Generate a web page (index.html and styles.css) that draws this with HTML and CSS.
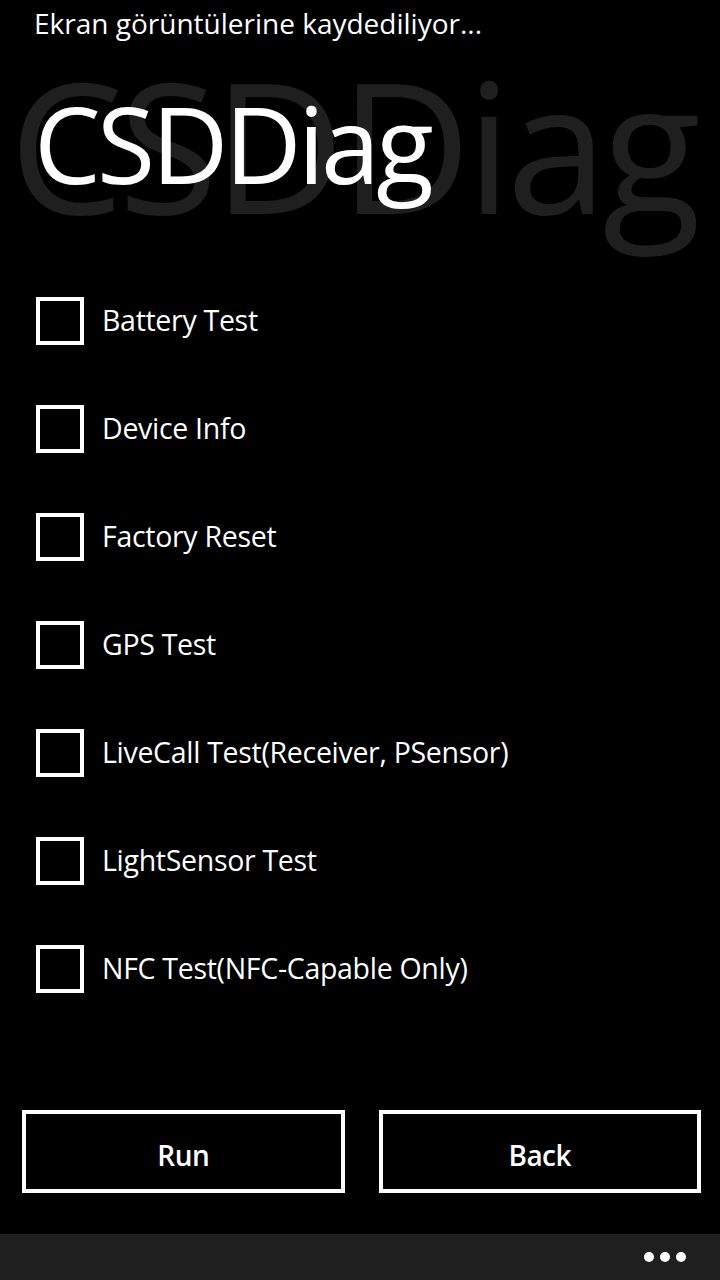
FILE: index.html
```html
<!DOCTYPE html>
<html lang="tr">
<head>
<meta charset="utf-8">
<title>CSDDiag</title>
<link rel="stylesheet" href="styles.css">
</head>
<body>
<div class="screen">
  <div class="status">Ekran görüntülerine kaydediliyor...</div>
  <header class="header">
    <div class="title-bg" aria-hidden="true">CSDDiag</div>
    <h1 class="title">CSDDiag</h1>
  </header>
  <ul class="tests">
    <li class="test"><span class="box"></span><span class="label">Battery Test</span></li>
    <li class="test"><span class="box"></span><span class="label">Device Info</span></li>
    <li class="test"><span class="box"></span><span class="label">Factory Reset</span></li>
    <li class="test"><span class="box"></span><span class="label">GPS Test</span></li>
    <li class="test"><span class="box"></span><span class="label">LiveCall Test(Receiver, PSensor)</span></li>
    <li class="test"><span class="box"></span><span class="label">LightSensor Test</span></li>
    <li class="test"><span class="box"></span><span class="label">NFC Test(NFC-Capable Only)</span></li>
  </ul>
  <div class="actions">
    <button class="btn">Run</button>
    <button class="btn">Back</button>
  </div>
  <footer class="appbar">
    <div class="dots"><span></span><span></span><span></span></div>
  </footer>
</div>
</body>
</html>
```
FILE: styles.css
```css
html, body {
  margin: 0;
  padding: 0;
  background: #000;
}
body {
  font-family: "Open Sans", "Noto Sans", sans-serif;
  color: #fff;
}
.screen {
  width: 720px;
  height: 1280px;
  display: flex;
  flex-direction: column;
  overflow: hidden;
}
.status {
  padding: 3px 0 0 34px;
  font-size: 28px;
  line-height: 40px;
  height: 40px;
  white-space: nowrap;
}
.header {
  position: relative;
  height: 107px;
  margin-top: 47px;
}
.title-bg {
  position: absolute;
  left: 9px;
  top: -38px;
  font-size: 182px;
  line-height: 1;
  color: #1f1f1f;
  letter-spacing: -5.4px;
  white-space: nowrap;
}
.title {
  position: relative;
  margin: 0;
  padding-left: 34px;
  font-size: 106px;
  line-height: 1;
  font-weight: 400;
  letter-spacing: -3.7px;
  white-space: nowrap;
}
.tests {
  list-style: none;
  margin: 100px 0 0;
  padding: 0 0 0 36px;
  display: flex;
  flex-direction: column;
  gap: 60px;
}
.test {
  display: flex;
  align-items: center;
  height: 48px;
  gap: 18px;
}
.box {
  width: 48px;
  height: 48px;
  box-sizing: border-box;
  border: 4px solid #fff;
  flex: none;
}
.label {
  font-size: 28.5px;
  line-height: 48px;
  letter-spacing: -0.3px;
  margin-top: -2px;
}
.actions {
  display: flex;
  gap: 34px;
  padding: 0 19px 0 22px;
  margin-top: 117px;
}
.btn {
  flex: 1;
  height: 83px;
  box-sizing: border-box;
  border: 4px solid #fff;
  background: #000;
  color: #fff;
  font-family: "Open Sans", "Noto Sans", sans-serif;
  font-size: 28px;
  font-weight: 600;
  letter-spacing: -0.5px;
  padding: 6px 0 0;
}
.appbar {
  margin-top: auto;
  height: 46px;
  background: #1f1f1f;
  display: flex;
  justify-content: flex-end;
  align-items: center;
  padding-right: 34px;
}
.dots {
  display: flex;
  gap: 6px;
}
.dots span {
  width: 10px;
  height: 10px;
  border-radius: 50%;
  background: #fff;
}
```
